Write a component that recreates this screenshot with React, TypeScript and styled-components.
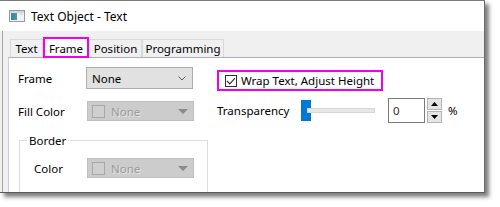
import React from 'react';
import styled, { createGlobalStyle } from 'styled-components';

const FONT = `"Noto Sans", "Liberation Sans", sans-serif`;
const MAGENTA = '#f000f0';

const GlobalStyle = createGlobalStyle`
  html, body {
    margin: 0;
    padding: 0;
    background: #fff;
  }
  body {
    font-family: ${ FONT };
    font-size: 11.5px;
    color: #000;
  }
`;

const Page = styled.div`
  width: 500px;
  height: 207px;
  overflow: hidden;
`;

const Window = styled.div`
  width: 484px;
  height: 191px;
  display: flex;
  flex-direction: column;
  border-top: 1px solid #7a7a7a;
  border-right: 1px solid #6a6a6a;
  border-bottom: 1px solid #5a5a5a;
  box-shadow: 4px 4px 4px rgba(0, 0, 0, 0.5);
  background: #fff;
  overflow: hidden;
`;

const TitleBar = styled.div`
  height: 30px;
  flex: none;
  display: flex;
  align-items: center;
  gap: 6px;
  padding-left: 9px;
  background: #fff;
  font-size: 12px;
`;

const Body = styled.div`
  flex: 1;
  display: flex;
  flex-direction: column;
  background: linear-gradient(to right, #f0f0f0 2px, #a6a6a6 2px, #a6a6a6 3px, #f0f0f0 3px);
  padding-left: 8px;
`;

const TabStrip = styled.div`
  height: 26px;
  flex: none;
  display: flex;
  align-items: flex-end;
  padding-left: 2px;
`;

const Tab = styled.div<{ $active?: boolean; $w: number }>`
  width: ${ p => p.$w }px;
  box-sizing: border-box;
  height: ${ p => (p.$active ? 21 : 18) }px;
  margin-bottom: ${ p => (p.$active ? -1 : 0) }px;
  display: flex;
  align-items: center;
  justify-content: center;
  background: ${ p => (p.$active ? '#fff' : '#f0f0f0') };
  border: 1px solid #d9d9d9;
  border-bottom: none;
  outline: ${ p => (p.$active ? `2px solid ${ MAGENTA }` : 'none') };
  outline-offset: -2px;
  position: relative;
  z-index: ${ p => (p.$active ? 1 : 0) };
`;

const Panel = styled.div`
  flex: 1;
  background: #fff;
  border-top: 1px solid #adadbc;
  border-left: 1px solid #cfcfdc;
  display: flex;
  padding: 9px 0 0 9px;
`;

const LeftCol = styled.div`
  width: 191px;
  display: flex;
  flex-direction: column;
`;

const RightCol = styled.div`
  display: flex;
  flex-direction: column;
  margin-left: 8px;
`;

const Row = styled.div<{ $top?: number }>`
  display: flex;
  align-items: center;
  margin-top: ${ p => p.$top ?? 0 }px;
`;

const Label = styled.span<{ $w: number }>`
  width: ${ p => p.$w }px;
  flex: none;
  white-space: nowrap;
`;

const Combo = styled.div<{ $disabled?: boolean }>`
  width: 107px;
  height: ${ p => (p.$disabled ? 20 : 22) }px;
  box-sizing: border-box;
  display: flex;
  align-items: center;
  padding-left: ${ p => (p.$disabled ? 4 : 5) }px;
  gap: 6px;
  background: ${ p => (p.$disabled ? '#cccccc' : '#e1e1e1') };
  border: 1px solid ${ p => (p.$disabled ? '#bfbfbf' : '#adadad') };
  color: ${ p => (p.$disabled ? '#9a9a9a' : '#000') };
  text-shadow: ${ p => (p.$disabled ? '1px 1px 0 #e6e6e6' : 'none') };
`;

const ComboText = styled.span`
  flex: 1;
`;

const Swatch = styled.span`
  width: 13px;
  height: 13px;
  box-sizing: border-box;
  border: 1px solid #a8a8a8;
  background: #cfcfcf;
`;

const Arrow = styled.span`
  width: 20px;
  display: flex;
  justify-content: center;
  align-items: center;
`;

const GroupBox = styled.fieldset`
  margin: 12px 0 0 1px;
  padding: 5px 0 30px 14px;
  border: 1px solid #dcdcdc;
  width: 189px;
  box-sizing: border-box;
  min-width: 0;
`;

const Legend = styled.legend`
  padding: 0 2px;
  margin-left: -7px;
  font-size: 11.5px;
`;

const CheckRow = styled.div`
  margin-top: 3px;
  width: 166px;
  height: 21px;
  box-sizing: border-box;
  border: 2px solid ${ MAGENTA };
  display: flex;
  align-items: center;
  gap: 4px;
  padding-left: 6px;
`;

const Check = styled.span`
  width: 12px;
  height: 12px;
  box-sizing: border-box;
  border: 1px solid #333;
  display: flex;
  align-items: center;
  justify-content: center;
  background: #fff;
`;

const Slider = styled.div`
  width: 74px;
  height: 22px;
  display: flex;
  align-items: center;
`;

const Thumb = styled.span`
  width: 10px;
  height: 21px;
  background: #0078d7;
  flex: none;
`;

const Track = styled.span`
  flex: 1;
  height: 3px;
  background: #e7e7e7;
  border: 1px solid #d6d6d6;
  margin-left: -4px;
`;

const SpinEdit = styled.div`
  width: 37px;
  height: 25px;
  box-sizing: border-box;
  border: 1px solid #7a7a7a;
  display: flex;
  align-items: center;
  padding-left: 4px;
  margin-left: 13px;
  color: #3a2a10;
`;

const SpinButtons = styled.div`
  display: flex;
  flex-direction: column;
  margin-left: 2px;
  gap: 1px;
  height: 25px;
`;

const SpinButton = styled.div`
  width: 15px;
  height: 12px;
  box-sizing: border-box;
  background: #e5e5e5;
  border: 1px solid #b4b4b4;
  display: flex;
  align-items: center;
  justify-content: center;
`;

const Percent = styled.span`
  margin-left: 6px;
`;

const WindowIcon = () => (
  <svg width="16" height="12" viewBox="0 0 16 12">
    <rect x="0.5" y="0.5" width="15" height="11" fill="#f4f4f4" stroke="#9a9a9a" />
    <rect x="1" y="1" width="14" height="2" fill="#d8d8d8" />
    <rect x="2" y="3" width="6" height="7" fill="#3f9a9a" />
    <rect x="2" y="3" width="3" height="7" fill="#4a7fb0" />
    <rect x="10" y="3" width="4" height="2" fill="#e2e2e2" />
  </svg>
);

const Chevron = () => (
  <svg width="8" height="5" viewBox="0 0 8 5">
    <path d="M0.5 0.5 L4 4 L7.5 0.5" fill="none" stroke="#606060" strokeWidth="1" />
  </svg>
);

const Triangle = ({ up, color = '#000', w = 7 }: { up?: boolean; color?: string; w?: number }) => (
  <svg width={ w } height={ Math.ceil(w / 2) } viewBox={ `0 0 ${ w } ${ Math.ceil(w / 2) }` }>
    { up
      ? <path d={ `M0 ${ Math.ceil(w / 2) } L${ w / 2 } 0 L${ w } ${ Math.ceil(w / 2) } Z` } fill={ color } />
      : <path d={ `M0 0 L${ w } 0 L${ w / 2 } ${ Math.ceil(w / 2) } Z` } fill={ color } /> }
  </svg>
);

const Tick = () => (
  <svg width="10" height="8" viewBox="0 0 10 8">
    <path d="M1 4 L3.8 6.8 L9 1.2" fill="none" stroke="#333" strokeWidth="1.2" />
  </svg>
);

const tabs = [
  { label: 'Text', w: 33 },
  { label: 'Frame', w: 46, active: true },
  { label: 'Position', w: 53 },
  { label: 'Programming', w: 82 },
];

const DisabledCombo = () => (
  <Combo $disabled>
    <Swatch />
    <ComboText>None</ComboText>
    <Arrow><Triangle color="#8a8a8a" w={ 10 } /></Arrow>
  </Combo>
);

export default function App() {
  return (
    <Page>
      <GlobalStyle />
      <Window>
        <TitleBar>
          <WindowIcon />
          <span>Text Object - Text</span>
        </TitleBar>
        <Body>
          <TabStrip>
            { tabs.map(t => <Tab key={ t.label } $w={ t.w } $active={ t.active }>{ t.label }</Tab>) }
          </TabStrip>
          <Panel>
            <LeftCol>
              <Row>
                <Label $w={ 68 }>Frame</Label>
                <Combo>
                  <ComboText>None</ComboText>
                  <Arrow><Chevron /></Arrow>
                </Combo>
              </Row>
              <Row $top={ 12 }>
                <Label $w={ 69 }>Fill Color</Label>
                <DisabledCombo />
              </Row>
              <GroupBox>
                <Legend>Border</Legend>
                <Row $top={ 5 }>
                  <Label $w={ 53 }>Color</Label>
                  <DisabledCombo />
                </Row>
              </GroupBox>
            </LeftCol>
            <RightCol>
              <CheckRow>
                <Check><Tick /></Check>
                <span>Wrap Text, Adjust Height</span>
              </CheckRow>
              <Row $top={ 7 }>
                <Label $w={ 84 }>Transparency</Label>
                <Slider>
                  <Thumb />
                  <Track />
                </Slider>
                <SpinEdit>0</SpinEdit>
                <SpinButtons>
                  <SpinButton><Triangle up w={ 7 } /></SpinButton>
                  <SpinButton><Triangle w={ 7 } /></SpinButton>
                </SpinButtons>
                <Percent>%</Percent>
              </Row>
            </RightCol>
          </Panel>
        </Body>
      </Window>
    </Page>
  );
}
